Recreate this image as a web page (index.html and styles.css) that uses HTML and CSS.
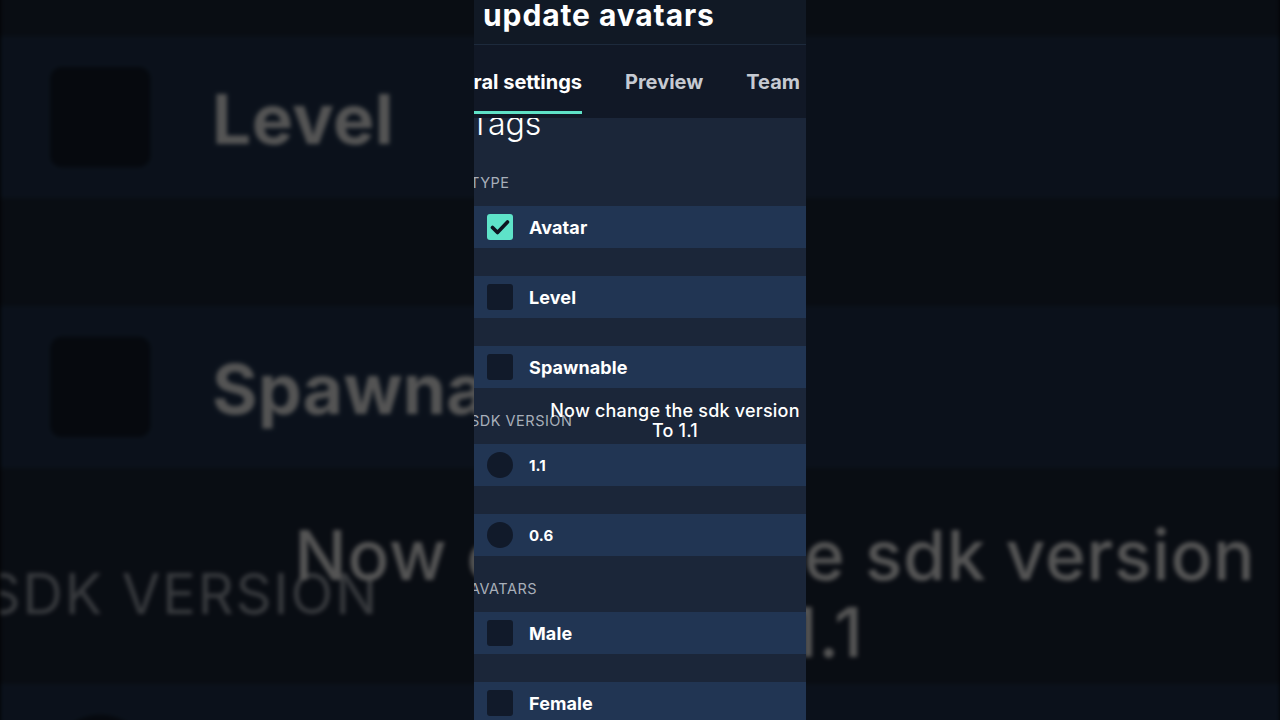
FILE: index.html
```html
<!DOCTYPE html>
<html lang="en">
<head>
    <meta charset="UTF-8">
    <meta name="viewport" content="width=device-width, initial-scale=1.0">
    <title>update avatars</title>
    <link rel="stylesheet" href="styles.css">
</head>
<body>
    <div class="backdrop" aria-hidden="true">
        <div class="phone">
            <div class="topbar"><h1 class="title">update avatars</h1></div>
            <div class="tabs">
                <span class="tab active">General settings</span>
                <span class="tab">Preview</span>
                <span class="tab">Team</span>
            </div>
            <div class="content">
                <h2 class="heading">Tags</h2>
                <div class="section">
                    <div class="section-label">TYPE</div>
                    <div class="row"><span class="box checked"><svg viewBox="0 0 26 26"><path d="M5.5 13.5l5 5L20.5 8"/></svg></span><span class="name">Avatar</span></div>
                    <div class="row"><span class="box"></span><span class="name">Level</span></div>
                    <div class="row"><span class="box"></span><span class="name">Spawnable</span></div>
                </div>
                <div class="section">
                    <div class="section-label">SDK VERSION</div>
                    <div class="row"><span class="radio"></span><span class="name small">1.1</span></div>
                    <div class="row"><span class="radio"></span><span class="name small">0.6</span></div>
                </div>
                <div class="section">
                    <div class="section-label">AVATARS</div>
                    <div class="row"><span class="box"></span><span class="name">Male</span></div>
                    <div class="row"><span class="box"></span><span class="name">Female</span></div>
                </div>
            </div>
            <div class="caption">Now change the sdk version<br>To 1.1</div>
        </div>
    </div>

    <div class="phone">
        <div class="topbar"><h1 class="title">update avatars</h1></div>
        <div class="tabs">
            <span class="tab active">General settings</span>
            <span class="tab">Preview</span>
            <span class="tab">Team</span>
        </div>
        <div class="content">
            <h2 class="heading">Tags</h2>
            <div class="section">
                <div class="section-label">TYPE</div>
                <div class="row"><span class="box checked"><svg viewBox="0 0 26 26"><path d="M5.5 13.5l5 5L20.5 8"/></svg></span><span class="name">Avatar</span></div>
                <div class="row"><span class="box"></span><span class="name">Level</span></div>
                <div class="row"><span class="box"></span><span class="name">Spawnable</span></div>
            </div>
            <div class="section">
                <div class="section-label">SDK VERSION</div>
                <div class="row"><span class="radio"></span><span class="name small">1.1</span></div>
                <div class="row"><span class="radio"></span><span class="name small">0.6</span></div>
            </div>
            <div class="section">
                <div class="section-label">AVATARS</div>
                <div class="row"><span class="box"></span><span class="name">Male</span></div>
                <div class="row"><span class="box"></span><span class="name">Female</span></div>
            </div>
        </div>
        <div class="caption">Now change the sdk version<br>To 1.1</div>
    </div>
</body>
</html>
```

FILE: styles.css
```css
body {
    margin: 0;
    width: 1280px;
    height: 720px;
    overflow: hidden;
    position: relative;
    display: flex;
    justify-content: center;
    background-color: #000;
    font-family: Inter, "Noto Sans", sans-serif;
    color: #fff;
}
.backdrop {
    position: absolute;
    inset: 0;
    display: flex;
    justify-content: center;
    overflow: hidden;
    filter: brightness(0.33);
}
.backdrop .phone {
    transform: scale(3.855);
    filter: blur(0.6px);
}
.phone {
    position: relative;
    width: 332px;
    height: 720px;
    flex-shrink: 0;
    display: flex;
    flex-direction: column;
    background-color: #1b2639;
    overflow: hidden;
}
.topbar {
    height: 44px;
    flex-shrink: 0;
    background-color: #111925;
    border-bottom: 1px solid #1d2a3c;
    padding-left: 9px;
    overflow: hidden;
}
.title {
    margin: 0;
    font-size: 30px;
    line-height: 30px;
    font-weight: 700;
    letter-spacing: 0.9px;
    white-space: nowrap;
}
.tabs {
    height: 73px;
    flex-shrink: 0;
    display: flex;
    justify-content: flex-end;
    align-items: flex-start;
    gap: 43px;
    padding-right: 6px;
    background-color: #111826;
    overflow: hidden;
}
.tab {
    flex-shrink: 0;
    padding: 25px 0 17px;
    border-bottom: 3px solid transparent;
    font-size: 20px;
    line-height: 24px;
    font-weight: 700;
    color: #c6cad2;
    white-space: nowrap;
}
.tab.active {
    color: #fff;
    border-bottom-color: #5fe1c6;
}
.content {
    flex: 1;
    overflow: hidden;
}
.heading {
    margin: -12px 0 8px -4px;
    font-size: 32px;
    line-height: 36px;
    font-weight: 300;
}
.section {
    display: flex;
    flex-direction: column;
    gap: 28px;
}
.section-label {
    margin-left: -4px;
    margin-bottom: -28px;
    padding: 24px 0 14px;
    font-size: 14.5px;
    line-height: 18px;
    color: #a8afba;
    letter-spacing: 0.5px;
}
.row {
    height: 42px;
    display: flex;
    align-items: center;
    gap: 16px;
    padding-left: 13px;
    background-color: #213553;
}
.box, .radio {
    width: 26px;
    height: 26px;
    flex-shrink: 0;
    background-color: #111a2a;
    border-radius: 3px;
}
.radio {
    border-radius: 50%;
}
.box.checked {
    background-color: #5ee3c9;
}
.box svg {
    display: block;
    width: 26px;
    height: 26px;
    fill: none;
    stroke: #0e1420;
    stroke-width: 3.6;
    stroke-linecap: round;
    stroke-linejoin: round;
}
.name {
    font-size: 18px;
    font-weight: 700;
    letter-spacing: 0.1px;
}
.name.small {
    font-size: 15px;
}
.caption {
    position: absolute;
    left: 201px;
    top: 401px;
    transform: translateX(-50%);
    text-align: center;
    white-space: nowrap;
    font-size: 18px;
    line-height: 20px;
    font-weight: 500;
    letter-spacing: 0.2px;
}
```
